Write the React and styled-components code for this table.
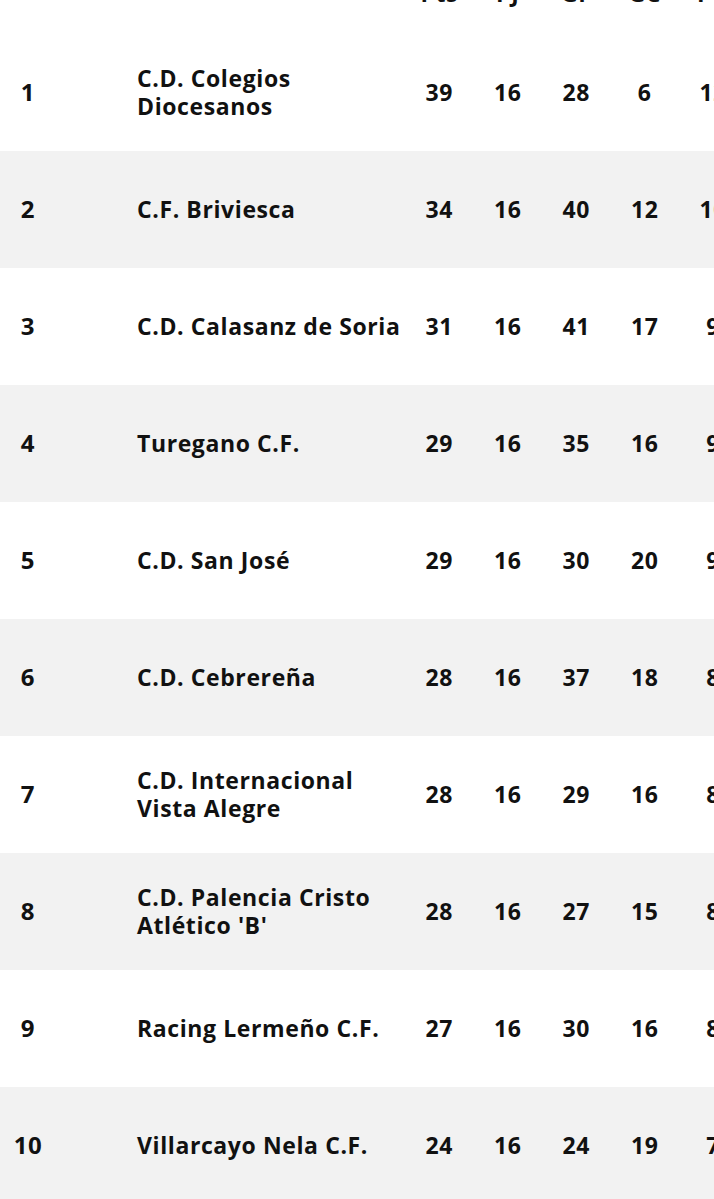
import React from 'react';
import styled, { createGlobalStyle } from 'styled-components';

const GlobalStyle = createGlobalStyle`
    html, body {
        margin: 0;
        padding: 0;
        background: #fff;
        overflow: hidden;
    }
    body {
        font-family: "Open Sans", "Liberation Sans", sans-serif;
        color: #111;
    }
`;

const columns = ['Pts', 'PJ', 'GF', 'GC', 'PG'];

const standings = [
    { pos: 1, team: 'C.D. Colegios Diocesanos', stats: [39, 16, 28, 6, 12] },
    { pos: 2, team: 'C.F. Briviesca', stats: [34, 16, 40, 12, 10] },
    { pos: 3, team: 'C.D. Calasanz de Soria', stats: [31, 16, 41, 17, 9] },
    { pos: 4, team: 'Turegano C.F.', stats: [29, 16, 35, 16, 9] },
    { pos: 5, team: 'C.D. San José', stats: [29, 16, 30, 20, 9] },
    { pos: 6, team: 'C.D. Cebrereña', stats: [28, 16, 37, 18, 8] },
    { pos: 7, team: 'C.D. Internacional Vista Alegre', stats: [28, 16, 29, 16, 8] },
    { pos: 8, team: "C.D. Palencia Cristo Atlético 'B'", stats: [28, 16, 27, 15, 8] },
    { pos: 9, team: 'Racing Lermeño C.F.', stats: [27, 16, 30, 16, 8] },
    { pos: 10, team: 'Villarcayo Nela C.F.', stats: [24, 16, 24, 19, 7] },
];

const App = () => {
    return (
        <>
            <GlobalStyle />
            <TableWrap>
                <Table>
                    <HeaderRow>
                        <PosCell />
                        <TeamCell />
                        {columns.map((c) => (
                            <StatCell key={c}>{c}</StatCell>
                        ))}
                    </HeaderRow>
                    {standings.map((row, idx) => (
                        <Row key={row.pos} $striped={idx % 2 === 1}>
                            <PosCell>{row.pos}</PosCell>
                            <TeamCell>{row.team}</TeamCell>
                            {row.stats.map((s, i) => (
                                <StatCell key={i}>{s}</StatCell>
                            ))}
                        </Row>
                    ))}
                </Table>
            </TableWrap>
        </>
    );
};

// Style components
const TableWrap = styled.div`
    width: 714px;
    height: 1199px;
    overflow: hidden;
`;

// page is scrolled a bit: header sits mostly above the fold
const Table = styled.div`
    margin-top: -44px;
    width: 800px;
    font-size: 23px;
    font-weight: 700;
    line-height: 28px;
    letter-spacing: 0.6px;
`;

const HeaderRow = styled.div`
    display: grid;
    grid-template-columns: 56px 349px repeat(5, 68.5px);
    align-items: center;
    height: 78px;
    padding-bottom: 4px;
    box-sizing: border-box;
    background: #fff;
`;

const Row = styled.div`
    display: grid;
    grid-template-columns: 56px 349px repeat(5, 68.5px);
    align-items: center;
    height: 117px;
    padding-bottom: 2px;
    box-sizing: border-box;
    background: ${(p) => (p.$striped ? '#f2f2f2' : '#fff')};
`;

const PosCell = styled.div`
    text-align: center;
    font-size: 24px;
`;

const TeamCell = styled.div`
    padding-left: 81px;
`;

const StatCell = styled.div`
    text-align: center;
`;

export default App;
